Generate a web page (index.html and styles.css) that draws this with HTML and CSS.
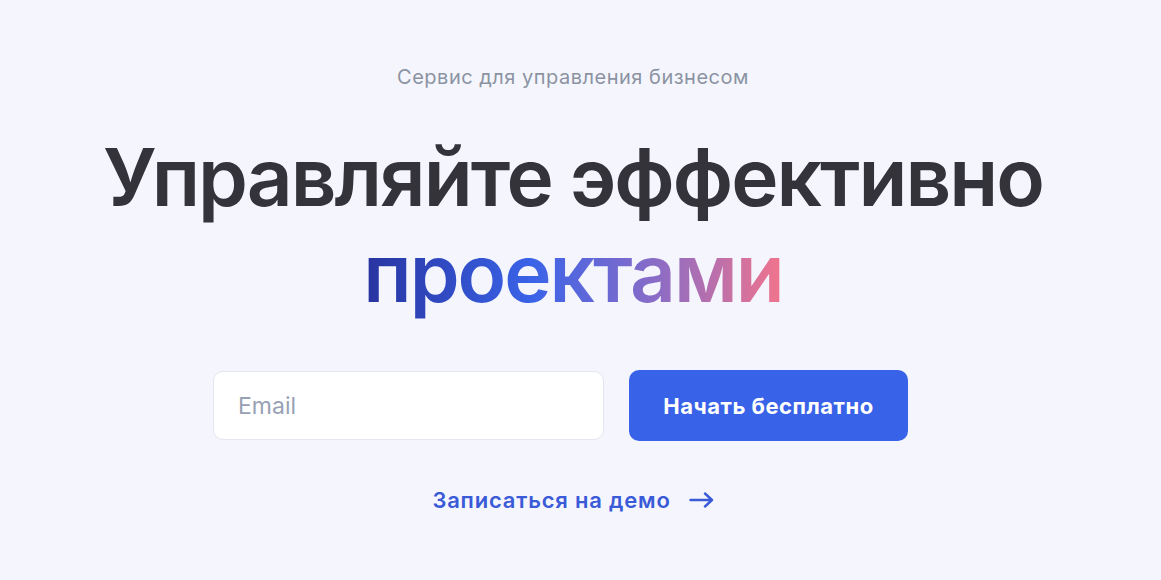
FILE: index.html
```html
<!DOCTYPE html>
<html lang="ru">
<head>
  <meta charset="UTF-8" />
  <title>Сервис для управления бизнесом</title>
  <link rel="stylesheet" href="styles.css">
</head>
<body>
  <main class="hero">
    <p class="hero-kicker">Сервис для управления бизнесом</p>
    <h1 class="hero-title">
      Управляйте эффективно<br>
      <span class="hero-accent">проектами</span>
    </h1>

    <form class="signup" onsubmit="return false">
      <input class="signup-email" type="email" placeholder="Email" />
      <button class="signup-button" type="submit">Начать бесплатно</button>
    </form>

    <a class="demo-link" href="#">
      Записаться на демо
      <svg class="demo-arrow" width="25" height="16" viewBox="0 0 25 16" fill="none">
        <path d="M1.5 8h21.5M16 1.5L23 8l-7 6.5" stroke="currentColor" stroke-width="2.4" stroke-linecap="round" stroke-linejoin="round"/>
      </svg>
    </a>
  </main>
</body>
</html>
```

FILE: styles.css
```css
/* Full-page layout */
html, body {
  height: 100%;
  margin: 0;
  padding: 0;
  font-family: Inter, "Noto Sans", sans-serif;
  background: #f5f6fd;
  color: #333339;
}

.hero {
  display: flex;
  flex-direction: column;
  align-items: center;
  padding: 64px 15px 0 0;
}

.hero-kicker {
  margin: 0;
  font-size: 20px;
  line-height: 26px;
  letter-spacing: 0.5px;
  color: #8b93a3;
}

.hero-title {
  margin: 39px 0 0;
  font-size: 80px;
  line-height: 96px;
  font-weight: 600;
  letter-spacing: -2px;
  text-align: center;
}

.hero-accent {
  background: linear-gradient(90deg, #28339f 0%, #3a63e8 40%, #8b6cc6 70%, #f2748c 100%);
  -webkit-background-clip: text;
  background-clip: text;
  color: transparent;
}

.signup {
  display: flex;
  align-items: center;
  gap: 25px;
  margin: 49px 25px 0 0;
}

.signup-email {
  width: 391px;
  height: 69px;
  box-sizing: border-box;
  padding: 0 24px;
  border: 1px solid #e3e6f0;
  border-radius: 10px;
  background: #fff;
  font-family: Inter, sans-serif;
  font-size: 23px;
  color: #333;
  outline: none;
}
.signup-email::placeholder {
  color: #97a1b3;
}

.signup-button {
  width: 279px;
  height: 71px;
  border: none;
  border-radius: 10px;
  background: #3862e8;
  color: #fff;
  font-family: Inter, sans-serif;
  font-size: 22px;
  font-weight: 700;
  letter-spacing: 0.5px;
  cursor: pointer;
}
.signup-button:hover {
  background: #2d52cf;
}

.demo-link {
  display: flex;
  align-items: center;
  gap: 18px;
  margin-top: 46px;
  font-size: 22px;
  line-height: 26px;
  font-weight: 600;
  letter-spacing: 0.8px;
  color: #3a5ad8;
  text-decoration: none;
}
```
